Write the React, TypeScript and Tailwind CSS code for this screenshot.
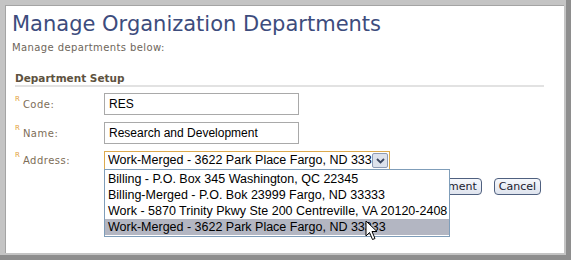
import React from "react";

const verdana = { fontFamily: '"DejaVu Sans", Verdana, sans-serif' };
const arial = { fontFamily: '"Liberation Sans", Arial, sans-serif' };

const options = [
  "Billing - P.O. Box 345 Washington, QC 22345",
  "Billing-Merged - P.O. Bok 23999 Fargo, ND 33333",
  "Work - 5870 Trinity Pkwy Ste 200 Centreville, VA 20120-2408",
  "Work-Merged - 3622 Park Place Fargo, ND 33333",
];

function Label({ text }: { text: string }) {
  return (
    <div className="flex w-[89px] items-start text-[10px] tracking-[0.5px] text-[#7d6d57]" style={verdana}>
      <span className="mr-[3px] mt-[-3px] text-[7px] tracking-normal text-[#e3a23c]">R</span>
      <span>{text}</span>
    </div>
  );
}

export default function App() {
  return (
    <div className="h-[260px] w-[571px] bg-[#8e8e8e] pb-[5px] pr-[5px]">
      <div className="h-full w-full border-b-2 border-l-[5px] border-r-2 border-t-[5px] border-[#c4c4c4]">
        <div className="relative h-full w-full border-l border-t border-[#a4a4a4] bg-white pl-[6px] pr-[20px] pt-[4px]">
          <h1 className="text-[21px] leading-[28px] text-[#3d4c7d]" style={verdana}>
            Manage Organization Departments
          </h1>
          <p className="mt-[2px] text-[10px] leading-[15px] tracking-[0.4px] text-[#6e665a]" style={verdana}>
            Manage departments below:
          </p>
          <div className="ml-[3px] mt-[17px]">
            <div className="border-b-2 border-[#e2e2e2] pb-[1px] text-[10.5px] font-bold leading-[12px] text-[#5e5240]" style={verdana}>
              Department Setup
            </div>
            <div className="mt-[6px] flex flex-col gap-[7px]">
              <div className="flex items-center">
                <Label text="Code:" />
                <div className="flex h-[22px] w-[195px] items-center border border-[#a9a9a9] pl-[4px] text-[12px] text-black" style={arial}>
                  RES
                </div>
              </div>
              <div className="flex items-center">
                <Label text="Name:" />
                <div className="flex h-[22px] w-[195px] items-center border border-[#a9a9a9] pl-[4px] text-[12px] text-black" style={arial}>
                  Research and Development
                </div>
              </div>
              <div className="flex items-center">
                <Label text="Address:" />
                <div className="flex h-[19px] w-[286px] items-center border border-[#dcaa4e] pl-[3px] pr-[1px] text-[12.5px] text-black" style={arial}>
                  <span className="flex-1 overflow-hidden whitespace-nowrap">Work-Merged - 3622 Park Place Fargo, ND 333</span>
                  <span className="flex h-[15px] w-[16px] shrink-0 items-center justify-center rounded-[2px] border border-[#8d9bb5] bg-[#dde2ec]">
                    <svg width="9" height="6" viewBox="0 0 9 6">
                      <path d="M1 1 L4.5 4.5 L8 1" stroke="#3a4660" strokeWidth="1.8" fill="none" />
                    </svg>
                  </span>
                </div>
              </div>
            </div>
            <div className="mr-[3px] mt-[8px] flex justify-end gap-[12px] text-[11px] text-[#1a1a2e]" style={verdana}>
              <button className="h-[17px] rounded-[4px] border border-[#4f607f] bg-gradient-to-b from-[#f6f8fc] to-[#dfe4ee] px-[4px] leading-[15px]">
                Add Department
              </button>
              <button className="h-[17px] rounded-[4px] border border-[#4f607f] bg-gradient-to-b from-[#f6f8fc] to-[#dfe4ee] px-[4px] leading-[15px]">
                Cancel
              </button>
            </div>
          </div>

          <div className="absolute left-[98px] top-[163px] w-[346px] border border-[#7f9db9] bg-white py-[1px] text-[12.5px] text-black" style={arial}>
            {options.map((o, i) => (
              <div
                key={o}
                className={`h-[16px] whitespace-nowrap pl-[3px] leading-[16px] ${i === 3 ? "bg-[#b3b6c2]" : ""}`}
              >
                {o}
              </div>
            ))}
          </div>

          <svg className="absolute left-[359px] top-[214px]" width="14" height="21" viewBox="0 0 14 21">
            <path d="M1 1 L1 16 L4.5 12.5 L7.5 19.5 L10 18.5 L7 11.5 L12 11.5 Z" fill="white" stroke="black" strokeWidth="1" strokeLinejoin="miter" />
          </svg>
        </div>
      </div>
    </div>
  );
}
